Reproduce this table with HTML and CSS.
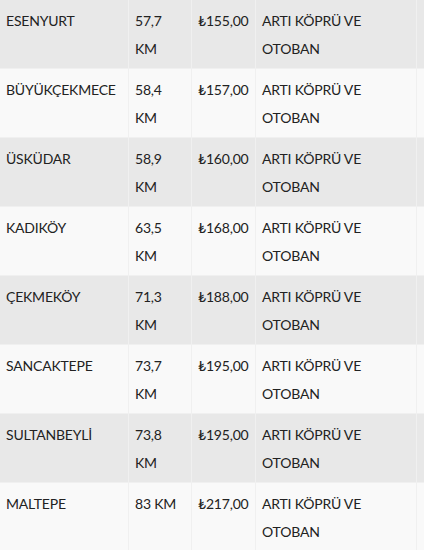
FILE: index.html
```
<!DOCTYPE html>
<html lang="tr">
<head>
<meta charset="utf-8">
<link rel="stylesheet" href="styles.css">
</head>
<body>
<div class="table">
  <div class="row odd"><div class="cell">ESENYURT</div><div class="cell">57,7 KM</div><div class="cell">₺155,00</div><div class="cell">ARTI KÖPRÜ VE OTOBAN</div><div class="cell"></div></div>
  <div class="row even"><div class="cell">BÜYÜKÇEKMECE</div><div class="cell">58,4 KM</div><div class="cell">₺157,00</div><div class="cell">ARTI KÖPRÜ VE OTOBAN</div><div class="cell"></div></div>
  <div class="row odd"><div class="cell">ÜSKÜDAR</div><div class="cell">58,9 KM</div><div class="cell">₺160,00</div><div class="cell">ARTI KÖPRÜ VE OTOBAN</div><div class="cell"></div></div>
  <div class="row even"><div class="cell">KADIKÖY</div><div class="cell">63,5 KM</div><div class="cell">₺168,00</div><div class="cell">ARTI KÖPRÜ VE OTOBAN</div><div class="cell"></div></div>
  <div class="row odd"><div class="cell">ÇEKMEKÖY</div><div class="cell">71,3 KM</div><div class="cell">₺188,00</div><div class="cell">ARTI KÖPRÜ VE OTOBAN</div><div class="cell"></div></div>
  <div class="row even"><div class="cell">SANCAKTEPE</div><div class="cell">73,7 KM</div><div class="cell">₺195,00</div><div class="cell">ARTI KÖPRÜ VE OTOBAN</div><div class="cell"></div></div>
  <div class="row odd"><div class="cell">SULTANBEYLİ</div><div class="cell">73,8 KM</div><div class="cell">₺195,00</div><div class="cell">ARTI KÖPRÜ VE OTOBAN</div><div class="cell"></div></div>
  <div class="row even"><div class="cell">MALTEPE</div><div class="cell">83 KM</div><div class="cell">₺217,00</div><div class="cell">ARTI KÖPRÜ VE OTOBAN</div><div class="cell"></div></div>
</div>
</body>
</html>
```
FILE: styles.css
```
html, body {
  margin: 0;
  padding: 0;
  background: #f9f9f9;
}
body {
  font-family: Lato, "Noto Sans", sans-serif;
  font-size: 14px;
  letter-spacing: -0.2px;
  color: #222;
  overflow: hidden;
}
.table {
  display: flex;
  flex-direction: column;
}
.row {
  display: grid;
  grid-template-columns: 129px 63px 64px 161px 1fr;
  height: 69px;
  box-sizing: border-box;
  border-bottom: 1px solid #f0f0f0;
}
.row.odd { background: #e8e8e8; }
.row.even { background: #f9f9f9; }
.cell {
  box-sizing: border-box;
  border-right: 1px solid #f0f0f0;
  padding: 7px 6px 5px 6px;
  line-height: 28px;
  overflow: hidden;
}
.cell:last-child { border-right: 0; }
```
